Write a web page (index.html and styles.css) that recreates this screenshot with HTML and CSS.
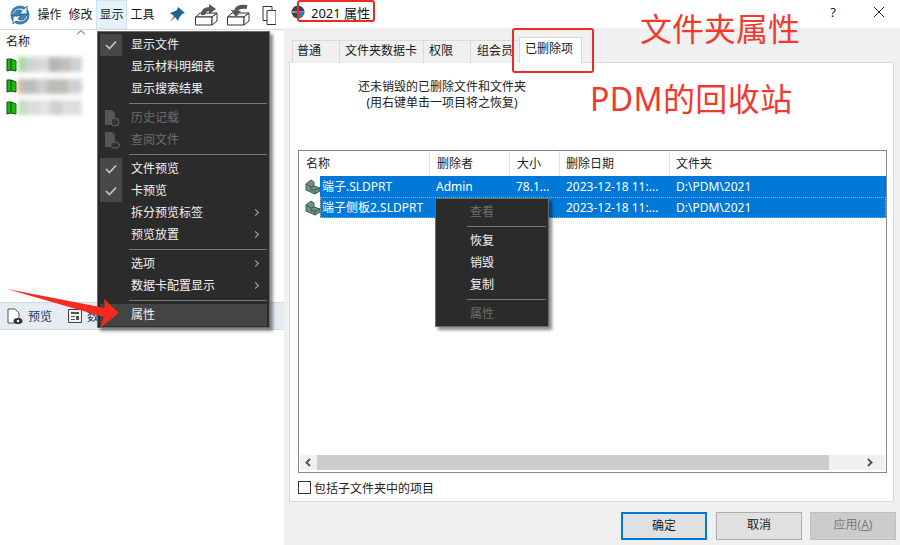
FILE: index.html
```html
<!DOCTYPE html>
<html lang="zh-CN">
<head>
    <meta charset="UTF-8">
    <title>2021 属性</title>
    <link rel="stylesheet" href="styles.css">
</head>
<body>
    <div class="explorer">
        <div class="toolbar">
            <svg class="logo" width="24" height="24" viewBox="0 0 24 24">
                <circle cx="12" cy="12" r="9.500" fill="#2f86c8"/>
                <path d="M4 13c0-6 6-10 12-7l3-3v8h-8l3-3c-3-2-7-1-8 3z" fill="#dfe9f2" stroke="#30536e" stroke-width=".8"/>
                <path d="M20 11c0 6-6 10-12 7l-3 3v-8h8l-3 3c3 2 7 1 8-3z" fill="#f2f5f7" stroke="#30536e" stroke-width=".8"/>
            </svg>
            <span class="tool">操作</span>
            <span class="tool">修改</span>
            <span class="tool active">显示</span>
            <span class="tool">工具</span>
            <svg class="pin" width="18" height="18" viewBox="0 0 18 18">
                <path d="M10 1l7 6-3 1-3 4-1 3-3-4-5 5 4-6-4-3 3-1 4-2z" fill="#1f6391"/>
            </svg>
            <svg class="box-icon" width="24" height="24" viewBox="0 0 24 24">
                <path d="M.5 14l4.500-4h17l-5 4z" fill="#f4f4f4" stroke="#333"/>
                <path d="M.5 14H17v8H.500z" fill="#fff" stroke="#333"/>
                <path d="M22 10v8l-5 4v-8z" fill="#fff" stroke="#333"/>
                <path d="M8 12c0-4 2-6 7-6" fill="none" stroke="#555" stroke-width="4"/>
                <path d="M14 1l7 5-7 5z" fill="#555"/>
            </svg>
            <svg class="box-icon" width="24" height="24" viewBox="0 0 24 24">
                <path d="M.5 14l4.500-4h17l-5 4z" fill="#f4f4f4" stroke="#333"/>
                <path d="M.5 14H17v8H.500z" fill="#fff" stroke="#333"/>
                <path d="M22 10v8l-5 4v-8z" fill="#fff" stroke="#333"/>
                <path d="M20 4c-6-1-10 0-11 4" fill="none" stroke="#555" stroke-width="4"/>
                <path d="M4 7l10 1-5 6z" fill="#555"/>
            </svg>
            <svg class="box-icon last" width="14" height="24" viewBox="0 0 14 24">
                <path d="M1 3.500h9v14H1z" fill="#fff" stroke="#333"/>
                <path d="M5 7.500h9v14H5z" fill="#fff" stroke="#333"/>
            </svg>
        </div>
        <div class="file-list">
            <svg class="sort-caret" width="8" height="5" viewBox="0 0 8 5"><path d="M0 4.500l4-4 4 4" fill="none" stroke="#555"/></svg>
            <div class="list-head">名称</div>
            <div class="file-row">
                <svg class="folder" width="11" height="14" viewBox="0 0 11 14"><path d="M1 1h4l5 2v10l-5-1-4 1z" fill="#1fb80e" stroke="#0b4a06"/><path d="M5 1v11" stroke="#0b4a06"/></svg>
                <span class="smudge smudge-a"></span>
            </div>
            <div class="file-row">
                <svg class="folder" width="11" height="14" viewBox="0 0 11 14"><path d="M1 1h4l5 2v10l-5-1-4 1z" fill="#1fb80e" stroke="#0b4a06"/><path d="M5 1v11" stroke="#0b4a06"/></svg>
                <span class="smudge smudge-b"></span>
            </div>
            <div class="file-row">
                <svg class="folder" width="11" height="14" viewBox="0 0 11 14"><path d="M1 1h4l5 2v10l-5-1-4 1z" fill="#1fb80e" stroke="#0b4a06"/><path d="M5 1v11" stroke="#0b4a06"/></svg>
                <span class="smudge smudge-c"></span>
            </div>
        </div>
        <div class="view-tabs">
            <svg width="16" height="17" viewBox="0 0 16 17">
                <path d="M1 1h7l4 4v10H1z" fill="#fff" stroke="#555"/>
                <ellipse cx="11" cy="13" rx="4.500" ry="3" fill="#333"/>
                <circle cx="11" cy="13" r="1.200" fill="#fff"/>
            </svg>
            <span class="view-tab">预览</span>
            <svg class="form-icon" width="14" height="14" viewBox="0 0 14 14">
                <path d="M.5.500h13v13H.500z" fill="#f4f4f4" stroke="#444"/>
                <path d="M3 3h8v2H3zM3 7h4v1H3zM3 10h4v1H3zM8 7h3v4H8z" fill="#555"/>
            </svg>
            <span class="view-tab">数</span>
        </div>
        <div class="explorer-rest"></div>
    </div>

    <div class="dialog">
        <div class="titlebar">
            <svg class="title-icon" width="14" height="16" viewBox="0 0 14 16">
                <circle cx="7" cy="8" r="6.500" fill="#39424d"/>
                <path d="M7 2v12M1 8h12" stroke="#d8dde2"/>
                <path d="M8 8h5a6 6 0 0 1-5 6z" fill="#2b79c9"/>
            </svg>
            <span class="title-text">2021 属性</span>
            <span class="title-btn help">?</span>
            <svg class="close" width="10" height="10" viewBox="0 0 10 10"><path d="M0 0l10 10M10 0L0 10" stroke="#222"/></svg>
        </div>
        <div class="dialog-body">
            <div class="tabs">
                <span class="tab tab-plain">普通</span>
                <span class="tab tab-card">文件夹数据卡</span>
                <span class="tab tab-plain">权限</span>
                <span class="tab tab-group">组会员</span>
                <span class="tab tab-on">已删除项</span>
            </div>
            <div class="panel">
                <p class="intro">还未销毁的已删除文件和文件夹<br>(用右键单击一项目将之恢复)</p>
                <div class="listview">
                    <div class="lv-head">
                        <span class="col col-name">名称</span>
                        <span class="col col-by">删除者</span>
                        <span class="col col-size">大小</span>
                        <span class="col col-date">删除日期</span>
                        <span class="col col-path">文件夹</span>
                    </div>
                    <div class="lv-row">
                        <svg class="part" width="16" height="16" viewBox="0 0 16 16">
                            <path d="M1 5l5-4 3 2v4l6 2v3l-5 3-9-4z" fill="#6f9278" stroke="#3b5a62"/>
                            <path d="M1 5l5 3v3M6 8l3-1M10 15v-4l5-2M6 11l4 0" fill="none" stroke="#3b5a62"/>
                        </svg>
                        <div class="lv-sel">
                            <span class="cell cell-name">端子.SLDPRT</span>
                            <span class="cell cell-by">Admin</span>
                            <span class="cell cell-size">78.1...</span>
                            <span class="cell cell-date">2023-12-18 11:...</span>
                            <span class="cell">D:\PDM\2021</span>
                        </div>
                    </div>
                    <div class="lv-row">
                        <svg class="part" width="16" height="16" viewBox="0 0 16 16">
                            <path d="M1 5l5-4 3 2v4l6 2v3l-5 3-9-4z" fill="#6f9278" stroke="#3b5a62"/>
                            <path d="M1 5l5 3v3M6 8l3-1M10 15v-4l5-2M6 11l4 0" fill="none" stroke="#3b5a62"/>
                        </svg>
                        <div class="lv-sel focus">
                            <span class="cell cell-name">端子侧板2.SLDPRT</span>
                            <span class="cell cell-by"></span>
                            <span class="cell cell-size"></span>
                            <span class="cell cell-date">2023-12-18 11:...</span>
                            <span class="cell">D:\PDM\2021</span>
                        </div>
                    </div>
                    <div class="lv-space"></div>
                    <div class="hscroll">
                        <svg class="arrow-l" width="6" height="9" viewBox="0 0 6 9"><path d="M5 1L1.500 4.500 5 8" fill="none" stroke="#555" stroke-width="2"/></svg>
                        <div class="thumb"></div>
                        <svg class="arrow-r" width="6" height="9" viewBox="0 0 6 9"><path d="M1 1l3.500 3.500L1 8" fill="none" stroke="#555" stroke-width="2"/></svg>
                    </div>
                </div>
                <label class="sub-check"><span class="checkbox"></span>包括子文件夹中的项目</label>
            </div>
            <div class="buttons">
                <span class="btn btn-default">确定</span>
                <span class="btn">取消</span>
                <span class="btn btn-off">应用(<u>A</u>)</span>
            </div>
        </div>
    </div>

    <!-- 显示菜单 -->
    <div class="menu view-menu">
        <div class="menu-item checked"><svg class="tick" width="12" height="10" viewBox="0 0 12 10"><path d="M1 5l3.500 3.500L11 1.500" fill="none" stroke="#c8c8c8" stroke-width="1.600"/></svg>显示文件</div>
        <div class="menu-item">显示材料明细表</div>
        <div class="menu-item">显示搜索结果</div>
        <div class="menu-sep"></div>
        <div class="menu-item off">
            <svg class="doc-icon" width="16" height="18" viewBox="0 0 16 18"><path d="M1 1h7l3 3v12H1z" fill="#555"/><circle cx="11" cy="13" r="4" fill="#333" stroke="#666"/></svg>历史记载</div>
        <div class="menu-item off">
            <svg class="doc-icon" width="16" height="18" viewBox="0 0 16 18"><path d="M1 1h7l3 3v12H1z" fill="#555"/><ellipse cx="11" cy="14" rx="4.500" ry="3" fill="#333" stroke="#666"/></svg>查阅文件</div>
        <div class="menu-sep"></div>
        <div class="menu-item checked"><svg class="tick" width="12" height="10" viewBox="0 0 12 10"><path d="M1 5l3.500 3.500L11 1.500" fill="none" stroke="#c8c8c8" stroke-width="1.600"/></svg>文件预览</div>
        <div class="menu-item checked"><svg class="tick" width="12" height="10" viewBox="0 0 12 10"><path d="M1 5l3.500 3.500L11 1.500" fill="none" stroke="#c8c8c8" stroke-width="1.600"/></svg>卡预览</div>
        <div class="menu-item sub">拆分预览标签</div>
        <div class="menu-item sub">预览放置</div>
        <div class="menu-sep"></div>
        <div class="menu-item sub">选项</div>
        <div class="menu-item sub">数据卡配置显示</div>
        <div class="menu-sep"></div>
        <div class="menu-item hover">属性</div>
    </div>

    <!-- 右键菜单 -->
    <div class="menu row-menu">
        <div class="menu-item off">查看</div>
        <div class="menu-sep"></div>
        <div class="menu-item">恢复</div>
        <div class="menu-item">销毁</div>
        <div class="menu-item">复制</div>
        <div class="menu-sep"></div>
        <div class="menu-item off">属性</div>
    </div>

    <!-- 标注 -->
    <div class="mark mark-title"></div>
    <div class="mark mark-tab"></div>
    <div class="note note-folder">文件夹属性</div>
    <div class="note note-bin">PDM的回收站</div>
    <svg class="red-arrow" width="125" height="50" viewBox="0 0 125 50">
        <path d="M4 0L102 19 101 10 116 24 97 39 101 28z" fill="#f5291d"/>
    </svg>
</body>
</html>
```

FILE: styles.css
```css
html, body {
    margin: 0;
    height: 545px;
    overflow: hidden;
}
body {
    position: relative;
    display: flex;
    background-color: white;
    font-family: "Noto Sans", "Noto Sans CJK SC", sans-serif;
    font-size: 12px;
    color: #1a1a1a;
}

/* 左边的资源管理器 */
.explorer {
    width: 284px;
    flex: none;
    display: flex;
    flex-direction: column;
}
.toolbar {
    height: 30px;
    flex: none;
    display: flex;
    align-items: center;
    padding-left: 8px;
    box-sizing: border-box;
    border-bottom: 1px solid #dcdcdc;
    overflow: hidden;
}
.toolbar svg {
    flex: none;
}
.tool {
    flex: none;
    width: 31px;
    height: 29px;
    line-height: 29px;
    text-align: center;
    white-space: nowrap;
}
.logo {
    margin-right: 2px;
}
.tool.active {
    background-color: #e5f1fb;
    box-shadow: inset 0 0 0 1px #cde4f7;
}
.pin {
    margin-left: 10px;
    margin-right: 9px;
}
.box-icon {
    margin-right: 8px;
}
.box-icon.last {
    margin-left: 3px;
    margin-right: 0;
}
.file-list {
    position: relative;
    height: 272px;
    flex: none;
    padding-left: 6px;
}
.sort-caret {
    position: absolute;
    left: 77px;
    top: 0;
}
.list-head {
    height: 24px;
    line-height: 24px;
}
.file-row {
    height: 21.500px;
    display: flex;
    align-items: center;
    gap: 1px;
}
.folder {
    flex: none;
}
.smudge {
    display: block;
    width: 64px;
    height: 15px;
    filter: blur(2px);
}
.smudge-a {
    background: linear-gradient(90deg, #a8d8a0 0 12%, #cfd3d6 12% 30%, #dcdad6 30% 48%, #b5b5b5 48% 66%, #c4bebb 66% 82%, #cdd2d8 82%);
}
.smudge-b {
    background: linear-gradient(90deg, #e8b080 0 5%, #bdbdbd 5% 30%, #cfd0d2 30% 46%, #bdbbb6 46% 78%, #cdd0d4 78%);
}
.smudge-c {
    background: linear-gradient(90deg, #bfe0b8 0 12%, #dcdcdc 12% 34%, #e4e4e4 34% 50%, #cfcfcf 50% 68%, #dedede 68%);
}
.view-tabs {
    height: 28px;
    flex: none;
    display: flex;
    align-items: center;
    padding-left: 7px;
    background-color: #e6ebf4;
    border-top: 1px solid #cfd6e2;
    border-bottom: 1px solid #d5d9e0;
    box-sizing: border-box;
}
.view-tab {
    margin-left: 5px;
    color: #1f3a60;
}
.form-icon {
    margin-left: 16px;
}
.explorer-rest {
    flex: 1;
}

/* 右边的属性对话框 */
.dialog {
    flex: 1;
    display: flex;
    flex-direction: column;
}
.titlebar {
    height: 28px;
    flex: none;
    display: flex;
    align-items: center;
    padding: 0 16px 4px 7px;
    box-sizing: border-box;
    background-color: white;
    font-size: 13px;
}
.title-text {
    margin-left: 6px;
    flex: 1;
    color: #111;
}
.help {
    margin-right: 38px;
    font-size: 13px;
}
.dialog-body {
    flex: 1;
    display: flex;
    flex-direction: column;
    background-color: #f0f0f0;
    padding: 0 4px 0 5px;
}
.tabs {
    height: 35px;
    flex: none;
    display: flex;
    align-items: flex-end;
    padding-left: 3px;
    margin-bottom: -1px;
}
.tab {
    position: relative;
    height: 23px;
    line-height: 20px;
    box-sizing: border-box;
    padding-left: 5px;
    white-space: nowrap;
    background-color: #f0f0f0;
    border: 1px solid #d9d9d9;
    border-bottom: none;
    margin-right: -1px;
}
.tab-plain {
    width: 48px;
}
.tab-plain:first-child {
    padding-left: 4px;
}
.tab-card {
    width: 85px;
}
.tab-group {
    width: 50px;
    padding-left: 6px;
    overflow: hidden;
}
.tab-on {
    height: 26px;
    line-height: 22px;
    width: 63px;
    padding-left: 5px;
    background-color: white;
    z-index: 1;
}
.panel {
    height: 440px;
    flex: none;
    box-sizing: border-box;
    width: 605px;
    background-color: white;
    border: 1px solid #d9d9d9;
    padding: 0 6px 0 8px;
}
.intro {
    margin: 0;
    width: 288px;
    height: 87px;
    padding-top: 16px;
    box-sizing: border-box;
    text-align: center;
    font-size: 12px;
    line-height: 16px;
    color: #222;
}
.listview {
    height: 323px;
    width: 589px;
    box-sizing: border-box;
    border: 1px solid #828790;
    display: flex;
    flex-direction: column;
}
.lv-head {
    height: 25px;
    flex: none;
    display: flex;
    line-height: 26px;
    color: #222;
}
.col {
    box-sizing: border-box;
    padding-left: 7px;
    border-right: 1px solid #e5e5e5;
}
.col-name {
    width: 131px;
}
.col-by {
    width: 80px;
}
.col-size {
    width: 50px;
}
.col-date {
    width: 110px;
    padding-left: 6px;
}
.col-path {
    flex: 1;
    padding-left: 6px;
    border-right: none;
}
.lv-row {
    height: 21px;
    flex: none;
    display: flex;
    align-items: center;
}
.part {
    margin-left: 6px;
    margin-right: -1px;
    flex: none;
}
.lv-sel {
    flex: 1;
    height: 21px;
    line-height: 22px;
    display: flex;
    background-color: #0078d7;
    color: white;
    box-sizing: border-box;
    white-space: nowrap;
}
.lv-sel.focus {
    outline: 1px dotted #f0a040;
    outline-offset: -1px;
}
.cell-name {
    width: 114px;
    padding-left: 2px;
}
.cell-by {
    width: 80px;
}
.cell-size {
    width: 50px;
}
.cell-date {
    width: 110px;
}
.lv-space {
    flex: 1;
}
.hscroll {
    height: 15px;
    flex: none;
    margin: 0 1px 2px 1px;
    display: flex;
    align-items: center;
    background-color: #f0f0f0;
}
.arrow-l {
    margin: 0 6px 0 5px;
}
.thumb {
    width: 512px;
    height: 15px;
    background-color: #cdcdcd;
}
.arrow-r {
    margin-left: 38px;
}
.sub-check {
    display: flex;
    align-items: center;
    height: 29px;
    color: #222;
}
.checkbox {
    width: 11px;
    height: 11px;
    border: 1px solid #333;
    background-color: white;
    margin-right: 3px;
}
.buttons {
    display: flex;
    gap: 8px;
    justify-content: flex-end;
    padding-top: 10px;
}
.btn {
    width: 86px;
    height: 28px;
    line-height: 24px;
    box-sizing: border-box;
    text-align: center;
    background-color: #e1e1e1;
    border: 1px solid #adadad;
}
.btn-default {
    border: 2px solid #0078d7;
    line-height: 23px;
    margin-right: 1px;
}
.btn-off {
    background-color: #cccccc;
    border-color: #bfbfbf;
    color: #7a7a7a;
}

/* 深色菜单 */
.menu {
    position: absolute;
    background-color: #2b2b2b;
    border: 1px solid #6b6b6b;
    box-shadow: 3px 3px 3px rgba(0, 0, 0, 0.45);
    color: #f2f2f2;
    box-sizing: border-box;
    padding: 2px;
}
.view-menu {
    left: 97px;
    top: 31px;
    width: 173px;
    height: 297px;
}
.row-menu {
    left: 435px;
    top: 198px;
    width: 114px;
    height: 129px;
}
.menu-item {
    position: relative;
    height: 22px;
    line-height: 22px;
    padding-left: 31px;
    white-space: nowrap;
}
.row-menu .menu-item {
    padding-left: 32px;
}
.menu-item.off {
    color: #6e6e6e;
}
.menu-item.checked {
    background: linear-gradient(90deg, #484848 22px, transparent 22px);
}
.tick {
    position: absolute;
    left: 5px;
    top: 6px;
}
.doc-icon {
    position: absolute;
    left: 4px;
    top: 2px;
}
.menu-item.sub::after {
    content: "";
    position: absolute;
    right: 9px;
    top: 8px;
    width: 4px;
    height: 4px;
    border-top: 1px solid #aaa;
    border-right: 1px solid #aaa;
    transform: rotate(45deg);
}
.menu-item.hover {
    background-color: #444444;
}
.menu-sep {
    height: 1px;
    margin: 3px 0 3px 29px;
    background-color: #777777;
}

/* 红色标注 */
.mark {
    position: absolute;
    border: 2px solid #ee2a24;
    border-radius: 3px;
    box-sizing: border-box;
}
.mark-title {
    left: 297px;
    top: 0;
    width: 78px;
    height: 22px;
}
.mark-tab {
    left: 512px;
    top: 28px;
    width: 82px;
    height: 45px;
}
.note {
    position: absolute;
    color: #f03a2e;
    font-size: 32px;
    line-height: 36px;
    white-space: nowrap;
}
.note-folder {
    left: 640px;
    top: 11px;
}
.note-bin {
    left: 590px;
    top: 81px;
    letter-spacing: 0.4px;
}
.red-arrow {
    position: absolute;
    left: 3px;
    top: 289px;
}
```
